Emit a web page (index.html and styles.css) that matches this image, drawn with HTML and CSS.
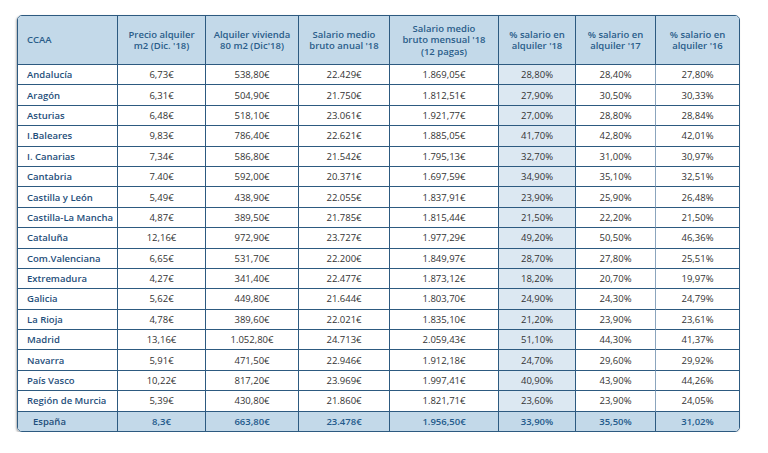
FILE: index.html
```html
<!DOCTYPE html>
<html lang="es">
<head>
<meta charset="utf-8">
<link rel="stylesheet" href="styles.css">
</head>
<body>
<div class="card">
<table class="data">
<colgroup>
<col class="c1"><col class="c2"><col class="c3"><col class="c4"><col class="c5"><col class="c6"><col class="c7"><col class="c8">
</colgroup>
<thead>
<tr>
<th class="name">CCAA</th>
<th>Precio alquiler<br>m2 (Dic. '18)</th>
<th>Alquiler vivienda<br>80 m2 (Dic'18)</th>
<th>Salario medio<br>bruto anual '18</th>
<th>Salario medio<br>bruto mensual '18<br>(12 pagas)</th>
<th>% salario en<br>alquiler '18</th>
<th>% salario en<br>alquiler '17</th>
<th>% salario en<br>alquiler '16</th>
</tr>
</thead>
<tbody>
<tr><td class="name">Andalucía</td><td>6,73€</td><td>538,80€</td><td>22.429€</td><td>1.869,05€</td><td class="hl">28,80%</td><td class="soft">28,40%</td><td>27,80%</td></tr>
<tr><td class="name">Aragón</td><td>6,31€</td><td>504,90€</td><td>21.750€</td><td>1.812,51€</td><td class="hl">27,90%</td><td class="soft">30,50%</td><td>30,33%</td></tr>
<tr><td class="name">Asturias</td><td>6,48€</td><td>518,10€</td><td>23.061€</td><td>1.921,77€</td><td class="hl">27,00%</td><td class="soft">28,80%</td><td>28,84%</td></tr>
<tr><td class="name">I.Baleares</td><td>9,83€</td><td>786,40€</td><td>22.621€</td><td>1.885,05€</td><td class="hl">41,70%</td><td class="soft">42,80%</td><td>42,01%</td></tr>
<tr><td class="name">I. Canarias</td><td>7,34€</td><td>586,80€</td><td>21.542€</td><td>1.795,13€</td><td class="hl">32,70%</td><td class="soft">31,00%</td><td>30,97%</td></tr>
<tr><td class="name">Cantabria</td><td>7.40€</td><td>592,00€</td><td>20.371€</td><td>1.697,59€</td><td class="hl">34,90%</td><td class="soft">35,10%</td><td>32,51%</td></tr>
<tr><td class="name">Castilla y León</td><td>5,49€</td><td>438,90€</td><td>22.055€</td><td>1.837,91€</td><td class="hl">23,90%</td><td class="soft">25,90%</td><td>26,48%</td></tr>
<tr><td class="name">Castilla-La Mancha</td><td>4,87€</td><td>389,50€</td><td>21.785€</td><td>1.815,44€</td><td class="hl">21,50%</td><td class="soft">22,20%</td><td>21,50%</td></tr>
<tr><td class="name">Cataluña</td><td>12,16€</td><td>972,90€</td><td>23.727€</td><td>1.977,29€</td><td class="hl">49,20%</td><td class="soft">50,50%</td><td>46,36%</td></tr>
<tr><td class="name">Com.Valenciana</td><td>6,65€</td><td>531,70€</td><td>22.200€</td><td>1.849,97€</td><td class="hl">28,70%</td><td class="soft">27,80%</td><td>25,51%</td></tr>
<tr><td class="name">Extremadura</td><td>4,27€</td><td>341,40€</td><td>22.477€</td><td>1.873,12€</td><td class="hl">18,20%</td><td class="soft">20,70%</td><td>19,97%</td></tr>
<tr><td class="name">Galicia</td><td>5,62€</td><td>449,80€</td><td>21.644€</td><td>1.803,70€</td><td class="hl">24,90%</td><td class="soft">24,30%</td><td>24,79%</td></tr>
<tr><td class="name">La Rioja</td><td>4,78€</td><td>389,60€</td><td>22.021€</td><td>1.835,10€</td><td class="hl">21,20%</td><td class="soft">23,90%</td><td>23,61%</td></tr>
<tr><td class="name">Madrid</td><td>13,16€</td><td>1.052,80€</td><td>24.713€</td><td>2.059,43€</td><td class="hl">51,10%</td><td class="soft">44,30%</td><td>41,37%</td></tr>
<tr><td class="name">Navarra</td><td>5,91€</td><td>471,50€</td><td>22.946€</td><td>1.912,18€</td><td class="hl">24,70%</td><td class="soft">29,60%</td><td>29,92%</td></tr>
<tr><td class="name">País Vasco</td><td>10,22€</td><td>817,20€</td><td>23.969€</td><td>1.997,41€</td><td class="hl">40,90%</td><td class="soft">43,90%</td><td>44,26%</td></tr>
<tr><td class="name">Región de Murcia</td><td>5,39€</td><td>430,80€</td><td>21.860€</td><td>1.821,71€</td><td class="hl">23,60%</td><td class="soft">23,90%</td><td>24,05%</td></tr>
</tbody>
<tfoot>
<tr><td class="name total">España</td><td>8,3€</td><td>663,80€</td><td>23.478€</td><td>1.956,50€</td><td>33,90%</td><td>35,50%</td><td>31,02%</td></tr>
</tfoot>
</table>
</div>
</body>
</html>
```

FILE: styles.css
```css
html, body {
  margin: 0;
  padding: 0;
  background: #ffffff;
}

body {
  font-family: "Open Sans", "Liberation Sans", sans-serif;
  padding: 15px 0 0 17px;
}

.card {
  width: 721px;
  border: 1px solid #2d5a80;
  border-radius: 5px;
  overflow: hidden;
  box-shadow: -1px 1px 2px rgba(0, 0, 0, 0.3);
}

.data {
  width: 721px;
  table-layout: fixed;
  border-collapse: separate;
  border-spacing: 0;
  font-size: 9.5px;
}

.c1 { width: 100px; }
.c2 { width: 88px; }
.c3 { width: 93px; }
.c4 { width: 91px; }
.c5 { width: 109px; }
.c6 { width: 77px; }
.c7 { width: 80px; }
.c8 { width: 83px; }

.data th,
.data td {
  padding: 0;
  text-align: center;
  border-right: 1px solid #2d5a80;
  border-bottom: 1px solid #2d5a80;
  white-space: nowrap;
}

.data th:last-child,
.data td:last-child {
  border-right: none;
}

.data th {
  height: 48px;
  background: #c3d9e9;
  color: #2a5d8a;
  font-weight: 600;
  line-height: 11.5px;
}

.data td {
  height: 19.4px;
  color: #333333;
  line-height: 13px;
}

.data th.name,
.data td.name {
  text-align: left;
  padding-left: 9px;
}

.data td.name {
  color: #1f4f7b;
  font-weight: 600;
}

.data td.hl {
  background: #dce8f2;
}

.data td.soft {
  border-right-color: #8ba5bd;
}

.data tfoot td {
  background: #c3d9e9;
  color: #245b8c;
  font-weight: 600;
  border-bottom: none;
}

.data td.total {
  padding-left: 15px;
}
```
